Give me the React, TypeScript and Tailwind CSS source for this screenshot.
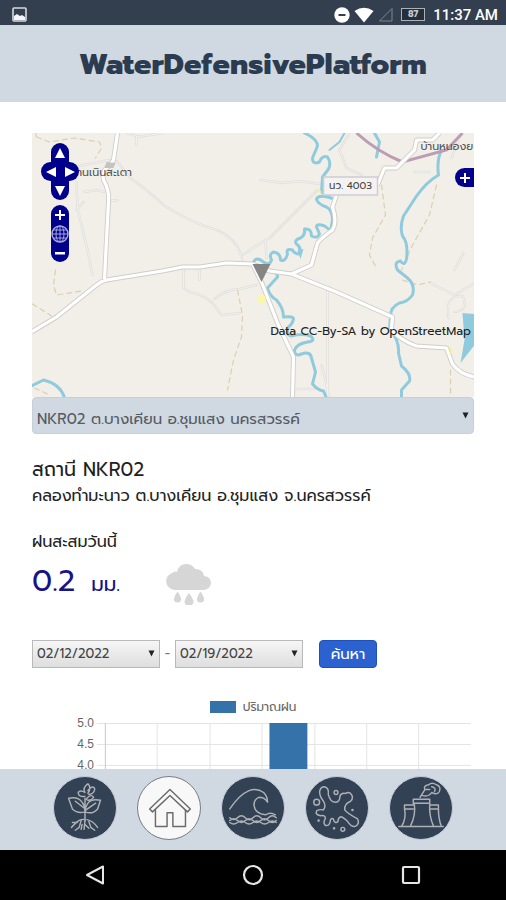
import React from "react";

const THAI = "font-['Prompt','Noto_Sans_Thai','Inter','Noto_Sans',sans-serif]";

function StatusBar() {
  return (
    <div className="flex h-[25px] shrink-0 items-center justify-between bg-[#333f4f] pt-1 pr-2 pl-3 text-white">
      <svg width="15" height="15" viewBox="0 0 15 15" aria-hidden="true">
        <rect x="1" y="1" width="13" height="13" rx="1" fill="none" stroke="#d5dae0" strokeWidth="1.6" />
        <path d="M2 13V9l3-2 3 2 2-1 3 2v3z" fill="#f4f6f8" />
      </svg>
      <div className="flex items-center gap-1">
        <svg width="16" height="16" viewBox="0 0 16 16" aria-hidden="true">
          <circle cx="8" cy="8" r="7.7" fill="#fff" />
          <path d="M4.5 8h7" stroke="#333f4f" strokeWidth="2" />
        </svg>
        <svg width="20" height="16" viewBox="0 0 20 16" aria-hidden="true">
          <path d="M0.5 4Q10-2.5 19.500 4L10 15.500z" fill="#fff" />
        </svg>
        <svg width="15" height="15" viewBox="0 0 15 15" aria-hidden="true">
          <path d="M14 1.500V14H1.500z" fill="none" stroke="#7d8794" />
        </svg>
        <span className="ml-1 flex h-[13px] w-[24px] items-center justify-center border border-[#a9b1bb] bg-[#252f3c] text-[9px] leading-none font-bold text-[#c4cad2]">
          87
        </span>
        <span className="ml-1 font-['Roboto',sans-serif] text-[15px] leading-5 font-medium">11:37 AM</span>
      </div>
    </div>
  );
}

const river = { fill: "none", stroke: "#8fcbdd", strokeLinecap: "round" as const, strokeLinejoin: "round" as const };

const MAIN_ROADS = [
  "M32 332L57 317L97 285Q102 281 107 280L163 271L183 267H200L227 263L253 264L270 271L292 274L337 292L393 317L392 330Q402 341 417 346L447 348L453 364Q460 374 475 377",
  "M118 133L114 160L110 166Q102 170 104 180Q110 190 109 202L107 240L105 279",
  "M253 264L262 282L278 323L294 357L293 397",
  "M292 274L312 265L318 243Q322 238 333 230Q338 222 333 207L337 195",
  "M378 185L385 168H397L415 150L417 140H433L440 133",
];

const SMALL_ROADS = [
  "M79 166L110 160M85 192L97 190L105 192M109 201L118 200M117 161L131 178Q150 192 164 205Q190 222 217 230Q240 240 243 262M243 255L260 244M128 133L137 136V145M137 137L164 133",
  "M77 182L78 208L88 250L93 275M77 210L84 202M184 268V288L190 292Q205 295 213 303L222 315L240 313M215 299Q225 290 240 289L257 285M200 267V280",
  "M261 180L283 183L300 181L320 184M340 150L347 168L362 175M250 250L270 238L318 190M266 240L267 258M415 172H430M328 290V397M322 365L330 397",
  "M350 133L340 150M462 133L452 158M431 283L455 295L475 283M449 318Q445 295 463 296Q470 310 455 312M455 270L464 253M294 389H315",
];

const TRACKS =
  "M37 137L50 142L75 138L100 142L102 148L96 158M37 137L36 133M56 270L54 285L57 295L82 291M33 304L52 316M238 290L243 315L242 337L234 360L228 390M382 185L386 215L373 238L370 255L377 268M437 185L430 215L412 247L402 270M403 280L418 285L431 282M451 370V396M35 388L48 394";

function OpenMap() {
  return (
    <svg
      viewBox="32 133 443 264"
      preserveAspectRatio="xMidYMid slice"
      className={"block h-full w-full " + THAI}
      role="img"
      aria-label="Map"
    >
      <rect x="32" y="133" width="443" height="264" fill="#f2efe9" />
      <g fill="none" strokeLinejoin="round" strokeLinecap="round">
        {SMALL_ROADS.map((d) => (
          <path key={d} d={d} stroke="#e0dfdb" strokeWidth="2.500" />
        ))}
        {SMALL_ROADS.map((d) => (
          <path key={d + "f"} d={d} stroke="#f3f1ed" strokeWidth="1" />
        ))}
        <path d={TRACKS} stroke="#dccfae" strokeWidth="1.200" strokeDasharray="5 4" />
      </g>
      <g {...river} strokeWidth="3">
        <path d="M305 133Q318 139 318 146L313 158Q313 165 320 162Q323 155 328 157Q332 163 329 169L323 177L322 192Q334 200 332 198Q319 194 317 199Q318 204 327 207Q333 210 333 220L331 231Q327 227 325 226Q317 223 317 227L320 234Q318 239 312 236Q312 228 305 229Q306 235 301 238Q294 240 297 244Q302 247 300 254Q295 254 293 250Q286 248 288 254Q286 262 281 260Q281 253 274 252Q269 254 272 260Q270 266 264 262Q257 256 254 262" />
        <path d="M267 271Q279 272 278 277L268 288Q270 296 277 300Q284 308 284 317Q294 316 294 319Q293 324 289 327Q286 335 292 336Q303 333 311 336Q317 341 308 342Q297 344 295 350Q295 357 302 354Q311 351 312 358L316 372L313 384Q318 390 324 391L327 398" />
        <path d="M442 150Q437 160 439 175Q427 182 417 196L404 216Q400 227 403 236Q409 243 407 259Q405 267 401 261Q394 262 398 270L408 278Q416 285 413 295Q408 302 400 303Q391 307 391 316L390 329Q400 340 399 353L402 366Q412 374 410 381L402 390V398" />
        <path d="M375 133L380 142L377 157M32 386L44 380Q61 384 65 398" />
        <path d="M345 133L340 142L330 150" strokeWidth="2" />
      </g>
      <path d="M463 313L475 314V345L461 363L465 340z" fill="#8fcbdd" />
      <path d="M298 250L304 249L301 259z" fill="#8fcbdd" />
      <path d="M357 133Q378 152 403 162L447 150L463 133" fill="none" stroke="#bd9db4" strokeWidth="3" />
      <g fill="none" strokeLinejoin="round">
        {MAIN_ROADS.map((d) => (
          <path key={d} d={d} stroke="#cfceca" strokeWidth="5" />
        ))}
        {MAIN_ROADS.map((d) => (
          <path key={d + "f"} d={d} stroke="#fff" strokeWidth="3.200" />
        ))}
      </g>
      <path d="M107 162L116 163L114 168H105z" fill="#c5c3bf" />
      <circle cx="262" cy="299" r="4" fill="#fbf8a4" />
      <path d="M320 188l2 5l-4-1zM451 346l2 6l-3 2z" fill="#f7f488" />
      <path d="M253 264H271L262 282z" fill="#858585" />
      <rect x="324" y="177" width="54" height="18" fill="#f4f3f2" stroke="#cfcdd2" strokeWidth="1.500" />
      <text x="351" y="189" textAnchor="middle" fontSize="10" fill="#444">นว. 4003</text>
      <text x="78" y="176" fontSize="11" fill="#555">านเนินสะเตา</text>
      <text x="421" y="150" fontSize="11" fill="#555">บ้านหนองย</text>
    </svg>
  );
}

const NAVY = "bg-[#00008b] text-white flex items-center justify-center";

function Arrow({ d }: { d: string }) {
  return (
    <svg width="12" height="12" viewBox="0 0 12 12" aria-hidden="true">
      <path d={d} fill="currentColor" />
    </svg>
  );
}

function MapControls() {
  return (
    <>
      <div className="absolute top-[10px] left-[9px] flex flex-col items-center">
        <button aria-label="Pan up" className={NAVY + " h-[19px] w-[18px] rounded-t-full"}>
          <Arrow d="M6 1L11 11H1z" />
        </button>
        <div className="flex">
          <button aria-label="Pan left" className={NAVY + " h-[19px] w-[19px] rounded-l-full"}>
            <Arrow d="M1 6L11 1V11z" />
          </button>
          <button aria-label="Pan right" className={NAVY + " h-[19px] w-[19px] rounded-r-full"}>
            <Arrow d="M11 6L1 1V11z" />
          </button>
        </div>
        <button aria-label="Pan down" className={NAVY + " h-[19px] w-[18px] rounded-b-full"}>
          <Arrow d="M6 11L11 1H1z" />
        </button>
        <div className="mt-[5px] overflow-hidden rounded-full">
          <button aria-label="Zoom in" className={NAVY + " h-[19px] w-[18px]"}>
            <Arrow d="M5 1h2v4h4v2H7v4H5V7H1V5h4z" />
          </button>
          <button aria-label="Zoom to world" className={NAVY + " h-[19px] w-[18px]"}>
            <svg width="18" height="18" viewBox="0 0 18 18" fill="none" stroke="#a5a5dc" aria-hidden="true">
              <circle cx="9" cy="9" r="8" strokeWidth="1.500" />
              <ellipse cx="9" cy="9" rx="4" ry="8" />
              <path d="M9 1V17M1 9H17M2.500 5H15.500M2.500 13H15.500" />
            </svg>
          </button>
          <button aria-label="Zoom out" className={NAVY + " h-[19px] w-[18px]"}>
            <Arrow d="M1 5h10v2.500H1z" />
          </button>
        </div>
      </div>
      <button aria-label="Show layers" className={NAVY + " absolute top-[35px] right-0 h-[19px] w-[19px] rounded-l-full"}>
        <Arrow d="M5 1h2v4h4v2H7v4H5V7H1V5h4z" />
      </button>
      <p className="absolute right-[3px] bottom-[56px] text-[12px] leading-5 text-[#222]">
        Data CC-By-SA by OpenStreetMap
      </p>
    </>
  );
}

function RainIcon() {
  return (
    <svg width="48" height="42" viewBox="0 0 48 42" fill="#d6d6d6" className="mb-1 self-end" aria-hidden="true">
      <path d="M11 27A10 9 0 0 1 9 9.500Q11 8 13 9Q15 1 22 1Q28 1 31 6Q39 6 40 13Q47 14 47 20Q46 27 39 27z" />
      <path d="M13.500 28.500q4 6 3.500 8a3.500 3 0 0 1-7 0q0-3 3.500-8zM25 30q5 7 4.500 9a4.500 3.500 0 0 1-9 0q0-3 4.500-9zM36.500 28.500q4 6 3.500 8a3.500 3 0 0 1-7 0q0-3 3.500-8z" />
    </svg>
  );
}

function DateSelect({ label, value }: { label: string; value: string }) {
  return (
    <div className="relative w-32">
      <select
        aria-label={label}
        className="block h-7 w-full appearance-none rounded-none border border-[#b9b9b9] bg-linear-to-b from-[#f6f6f6] to-[#dedede] px-1 text-[13px] text-[#444]"
      >
        <option>{value}</option>
      </select>
      <Caret className="absolute top-[10px] right-[5px]" />
    </div>
  );
}

function Caret({ className }: { className: string }) {
  return (
    <svg width="7" height="7" viewBox="0 0 7 7" className={"pointer-events-none " + className} aria-hidden="true">
      <path d="M0.500 0.500H6.500L3.500 6.500z" fill="#222" />
    </svg>
  );
}

const COLUMNS = [105, 157, 210, 262, 315, 367, 419];
const TICKS = [
  { label: "5.0", y: 4 },
  { label: "4.5", y: 25 },
  { label: "4.0", y: 46 },
];

function RainChart() {
  return (
    <figure className="mt-[27px]">
      <figcaption className="flex h-6 items-center justify-center gap-[7px] text-[12px] text-[#666]">
        <span className="h-3 w-[26px] bg-[#3572a9]" />
        ปริมาณฝน
      </figcaption>
      <svg viewBox="32 0 443 60" className="block w-full overflow-visible font-['Liberation_Sans',sans-serif]" role="img" aria-label="ปริมาณฝน">
        {TICKS.map((t) => (
          <g key={t.label}>
            <path d={`M97 ${t.y}.5H472`} stroke="#e4e4e4" />
            <text x="94" y={t.y + 4} textAnchor="end" fontSize="12" fill="#666">
              {t.label}
            </text>
          </g>
        ))}
        {COLUMNS.map((x, i) => (
          <path key={x} d={`M${x}.5 4V60`} stroke={i === 0 ? "#c8c8c8" : "#e4e4e4"} />
        ))}
        <rect x="270" y="4" width="38" height="56" fill="#3572a9" />
      </svg>
    </figure>
  );
}

const NAV = [
  {
    name: "Plants",
    art: (
      <>
        <path d="M32 45V22M32 36Q24 38 19 33L15 22Q25 20 29 26Q32 30 32 36M32 36Q40 39 45 33L48 24Q39 22 35 27Q32 31 32 36M31 32L22 25M33 34L43 27" />
        <path d="M32 20Q25 21 25 16Q27 13 32 16M32 16Q29 11 35 7Q39 11 35 17M35 14Q40 8 42 12Q42 17 36 18M34 22Q38 17 41 21Q37 26 33 23" />
        <path d="M32 44Q28 43 24 46L18 52M28 45L26 52L22 55M32 45L31 54M32 49L36 53M34 44Q40 45 45 52M36 46L38 52L42 55M29 49L28 54M24 47L19 47" />
      </>
    ),
  },
  {
    name: "Home",
    art: (
      <>
        <path d="M12 33L33 13L54 33L51 36L33 19L15 36z" />
        <path d="M18 34V51H30V37H36V51H49V34" />
      </>
    ),
  },
  {
    name: "Flood",
    art: (
      <>
        <path d="M8 33Q18 18 28 14Q36 11 43 16Q47 20 47 26Q44 21 38 21Q33 23 33 29Q34 38 45 39Q50 36 55 39" />
        <path d="M8 42q4 4 8 0t8 0t8 0t8 0t8 0t8 0M8 45q4-4 8 0t8 0t8 0t8 0t8 0t8 0M8 47q4 3 8 0t8 0t8 0t8 0t8 0t8 0" />
      </>
    ),
  },
  {
    name: "Pollution",
    art: (
      <>
        <path d="M14 15Q15 10 19 10Q24 11 23 18Q25 26 30 26Q35 26 35 20Q36 16 41 17Q43 15 46 17Q50 21 46 25Q39 28 40 34Q43 38 53 43Q56 48 51 51Q47 52 43 46Q38 41 36 41Q33 42 33 46Q30 49 28 43Q25 42 25 46Q24 51 20 50Q17 47 20 43Q20 39 15 40Q9 39 11 35Q14 33 18 34Q21 30 18 25Q14 20 14 15z" />
        <circle cx="11" cy="26" r="3" />
        <circle cx="31" cy="16" r="2" />
        <circle cx="38" cy="54" r="2" />
        <circle cx="48" cy="34" r="0.6" />
        <circle cx="13" cy="45" r="0.6" />
        <circle cx="29" cy="53" r="0.6" />
      </>
    ),
  },
  {
    name: "Industry",
    art: (
      <>
        <path d="M9 51H55M24 23H41V27Q40 40 45 51M25 27Q27 39 21 51M24 23V27H41M24 29H15V33Q17 43 12 51M15 33H24M42 29H50V33Q50 43 53 51M42 33H50" />
        <path d="M31 21L36 13Q34 9 40 8Q43 5 48 8Q53 10 51 15Q49 19 43 16Q40 21 33 19M37 13H41M43 10Q48 11 46 15" />
      </>
    ),
  },
];

function BottomNav() {
  return (
    <nav className="flex h-[81px] shrink-0 items-center justify-center gap-5 bg-[#d0d8e1] pb-[3px]">
      {NAV.map((item) => (
        <button
          key={item.name}
          aria-label={item.name}
          className={
            item.name === "Home"
              ? "size-16 rounded-full border border-[#777d86] bg-[#f8f8f8] text-[#6b6b6b]"
              : "size-16 rounded-full border border-[#c3ccd6] bg-[#334154] text-[#adb1b5]"
          }
        >
          <svg viewBox="0 0 64 64" className="block size-full" fill="none" stroke="currentColor" strokeWidth="1.500" strokeLinejoin="round" strokeLinecap="round" aria-hidden="true">
            {item.art}
          </svg>
        </button>
      ))}
    </nav>
  );
}

function SystemBar() {
  const cell = "flex h-full w-1/3 max-w-[158px] items-center justify-center";
  return (
    <div className="flex h-[50px] shrink-0 items-center justify-center bg-black text-[#e6e6e6]">
      <button aria-label="Back" className={cell}>
        <svg width="20" height="20" viewBox="0 0 20 20" fill="none" stroke="currentColor" strokeWidth="2" strokeLinejoin="round">
          <path d="M18 1.500V18.500L2 10z" />
        </svg>
      </button>
      <button aria-label="Home screen" className={cell}>
        <svg width="22" height="22" viewBox="0 0 22 22" fill="none" stroke="currentColor" strokeWidth="2.200">
          <circle cx="11" cy="11" r="9" />
        </svg>
      </button>
      <button aria-label="Recent apps" className={cell}>
        <svg width="20" height="20" viewBox="0 0 20 20" fill="none" stroke="currentColor" strokeWidth="2.200">
          <rect x="2" y="2" width="16" height="16" rx="1" />
        </svg>
      </button>
    </div>
  );
}

export default function App() {
  return (
    <div className={"flex h-screen flex-col overflow-hidden bg-white text-[#222] " + THAI}>
      <StatusBar />
      <header className="flex h-[77px] shrink-0 items-center justify-center bg-[#d0d8e1]">
        <h1 className="text-[29px] leading-10 font-extrabold text-[#2b3b50]">WaterDefensivePlatform</h1>
      </header>
      <main className="min-h-0 flex-1 overflow-hidden px-8 pt-[31px]">
        <div className="relative h-[264px] overflow-hidden">
          <OpenMap />
          <MapControls />
        </div>
        <div className="relative">
          <select
            aria-label="สถานี"
            className="block h-[37px] w-full appearance-none rounded border border-[#c6cfda] bg-[#d0d8e1] px-1 pt-2 text-[15px] text-[#555b63]"
          >
            <option>NKR02 ต.บางเคียน อ.ชุมแสง นครสวรรค์</option>
          </select>
          <Caret className="absolute top-[15px] right-[5px]" />
        </div>
        <h2 className="mt-[23px] text-[19px] leading-[26px]">สถานี NKR02</h2>
        <p className="text-[16px] leading-[26px]">คลองทำมะนาว ต.บางเคียน อ.ชุมแสง จ.นครสวรรค์</p>
        <p className="mt-5 text-[16px] leading-[26px]">ฝนสะสมวันนี้</p>
        <div className="flex h-[54px] items-center text-[#17138a]">
          <p className="flex w-[132px] items-baseline gap-4">
            <span className="text-[30px] leading-10">0.2</span>
            <span className="text-[20px] leading-10">มม.</span>
          </p>
          <RainIcon />
        </div>
        <form className="mt-[31px] flex items-center" onSubmit={(e) => e.preventDefault()}>
          <DateSelect label="Start date" value="02/12/2022" />
          <span className="w-[15px] text-center text-[13px] text-[#777]">-</span>
          <DateSelect label="End date" value="02/19/2022" />
          <button className="ml-4 h-7 w-[58px] rounded border border-[#1d50bd] bg-[#2c62cf] text-[15px] leading-6 text-white">
            ค้นหา
          </button>
        </form>
        <RainChart />
      </main>
      <BottomNav />
      <SystemBar />
    </div>
  );
}
